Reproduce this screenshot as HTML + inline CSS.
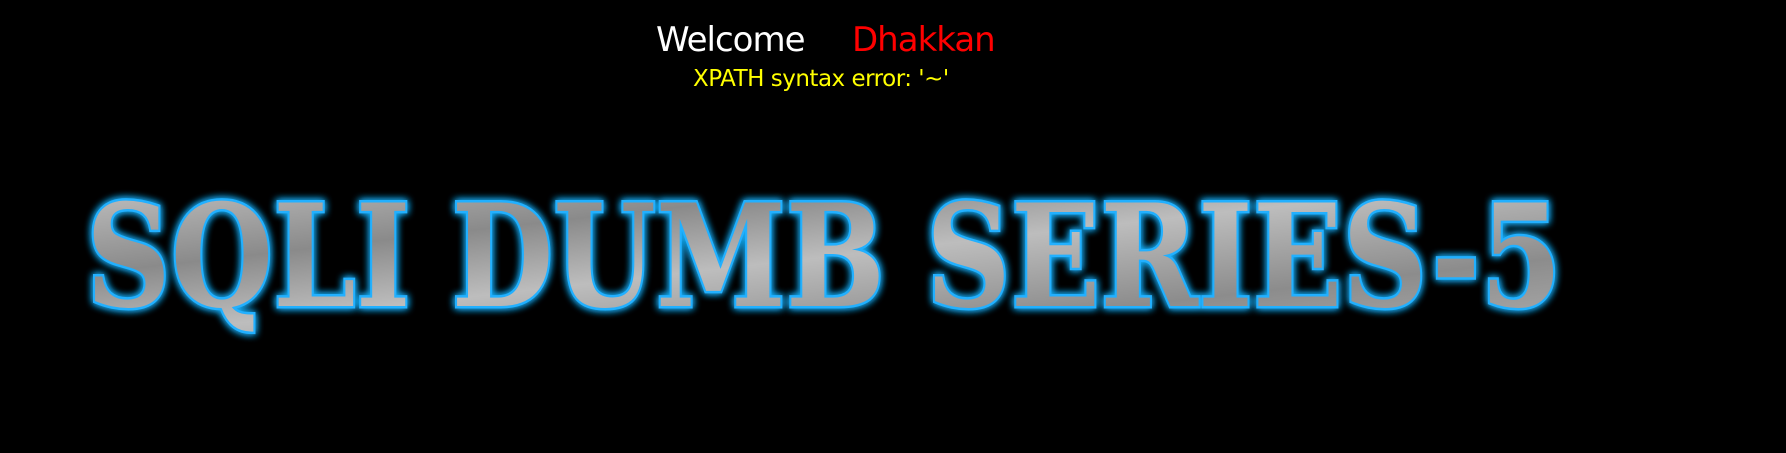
<!DOCTYPE html>
<html><head><style>
html,body{margin:0;padding:0;background:#000;width:1786px;height:453px;overflow:hidden}
.t{position:absolute;font-family:"DejaVu Sans","Liberation Sans",sans-serif;white-space:nowrap}
</style></head><body>
<div class="t" style="left:656px;top:20px;font-size:34px;color:#fff;letter-spacing:-1px">Welcome</div>
<div class="t" style="left:852px;top:20px;font-size:34px;color:#f00;letter-spacing:-1px">Dhakkan</div>
<div class="t" style="left:693px;top:66px;font-size:23px;color:#ff0;letter-spacing:-0.5px">XPATH syntax error: '~'</div>
<svg style="position:absolute;left:0;top:0" width="1786" height="453">
<defs>
<linearGradient id="g" x1="0" y1="0" x2="1" y2="1">
<stop offset="0" stop-color="#c8c8c8"/><stop offset="0.3" stop-color="#8a8a8a"/>
<stop offset="0.5" stop-color="#bdbdbd"/><stop offset="0.75" stop-color="#8c8c8c"/><stop offset="1" stop-color="#b0b0b0"/>
</linearGradient>
<filter id="f" x="-5%" y="-30%" width="110%" height="160%">
<feGaussianBlur stdDeviation="4" in="SourceAlpha" result="b"/>
<feFlood flood-color="#18a8f0"/><feComposite in2="b" operator="in" result="glow"/>
<feMerge><feMergeNode in="glow"/><feMergeNode in="glow"/><feMergeNode in="SourceGraphic"/></feMerge>
</filter>
</defs>
<text x="86" y="306" font-family="DejaVu Serif, Liberation Serif, serif" font-weight="bold" font-size="142" textLength="1476" lengthAdjust="spacingAndGlyphs" fill="url(#g)" stroke="#20b0ff" stroke-width="5" paint-order="stroke" filter="url(#f)">SQLI DUMB SERIES-5</text>
</svg>
</body></html>
